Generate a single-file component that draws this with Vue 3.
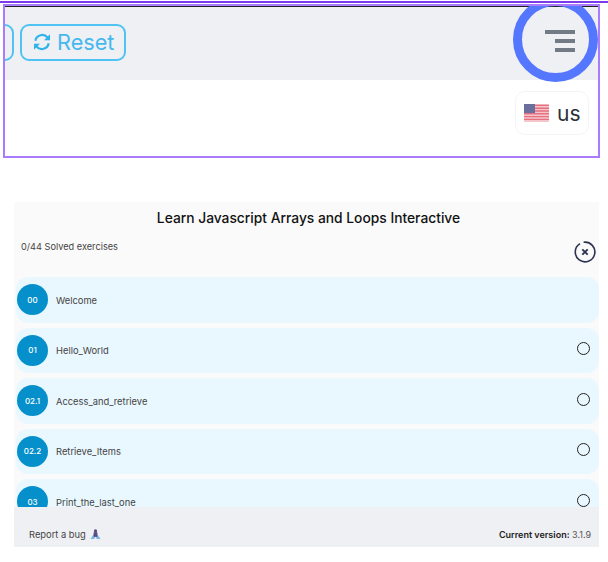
<template>
  <div class="page">
    <div class="top-line"></div>
    <div class="frame">
      <div class="dark-line"></div>
      <header class="toolbar">
        <div class="btn btn-cut"></div>
        <button class="btn reset">
          <svg class="reset-icon" viewBox="0 0 24 24" fill="none" stroke="#2fb4ea" stroke-width="2.6">
            <path d="M4 10.5A8.3 8.3 0 0 1 18.6 6.6L21 9" />
            <path d="M21.6 2.6V9.8H14.4Z" fill="#2fb4ea" stroke="none" />
            <path d="M20 13.5A8.3 8.3 0 0 1 5.4 17.4L3 15" />
            <path d="M2.4 21.4V14.2H9.6Z" fill="#2fb4ea" stroke="none" />
          </svg>
          <span>Reset</span>
        </button>
        <div class="burger">
          <span class="bar bar-long"></span>
          <span class="bar"></span>
          <span class="bar"></span>
        </div>
      </header>
      <div class="lang-row">
        <div class="lang">
          <svg class="flag" viewBox="0 0 25 18">
            <rect width="25" height="18" rx="1" fill="#f6c4cb" />
            <path d="M0 1.4H25M0 4.2H25M0 7H25M0 9.8H25M0 12.6H25M0 15.4H25" stroke="#e5707f" stroke-width="1.4" />
            <rect width="11" height="9" fill="#6a6f9e" />
          </svg>
          <span>us</span>
        </div>
      </div>
      <div class="ring"></div>
    </div>

    <section class="card">
      <h1>Learn Javascript Arrays and Loops Interactive</h1>
      <div class="progress">
        <span>0/44 Solved exercises</span>
        <svg class="close" viewBox="0 0 22 22" fill="none" stroke="#2d3350">
          <path d="M9.6 1.3A9.8 9.8 0 1 1 6 2.6" stroke-width="1.6" />
          <path d="M8.3 8.3L13.7 13.7M13.7 8.3L8.3 13.7" stroke-width="1.9" />
        </svg>
      </div>
      <ul class="list">
        <li v-for="ex in exercises" :key="ex.id" class="row">
          <span class="num">{{ ex.id }}</span>
          <span class="name">{{ ex.name }}</span>
          <span v-if="ex.id !== '00'" class="status"></span>
        </li>
      </ul>
      <footer class="foot">
        <span class="bug">
          Report a bug
          <svg class="bug-icon" viewBox="0 0 12 12">
            <path d="M0.5 11L4.5 5H7.5L11.5 11H7.5L6 8.5L4.5 11Z" fill="#7ab6e6" />
            <rect x="4" y="3.5" width="4" height="5" fill="#5c4a7c" />
            <circle cx="6" cy="2.2" r="1.8" fill="#5c4a7c" />
          </svg>
        </span>
        <span class="version"><b>Current version:</b> 3.1.9</span>
      </footer>
    </section>
  </div>
</template>

<script setup>
const exercises = [
  { id: "00", name: "Welcome" },
  { id: "01", name: "Hello_World" },
  { id: "02.1", name: "Access_and_retrieve" },
  { id: "02.2", name: "Retrieve_Items" },
  { id: "03", name: "Print_the_last_one" },
];
</script>

<style>
html, body {
  margin: 0;
  background: #fff;
}
</style>

<style scoped>
.page {
  width: 608px;
  height: 562px;
  overflow: hidden;
  font-family: Inter, "Liberation Sans", sans-serif;
}
.top-line {
  height: 2px;
  margin-top: 1px;
  background: #7c3aed;
}
.frame {
  position: relative;
  box-sizing: border-box;
  width: 597px;
  height: 154px;
  margin: 1px 0 0 3px;
  border: 2px solid #a97bff;
  overflow: hidden;
}
.dark-line {
  height: 1px;
  background: #222;
}
.toolbar {
  box-sizing: border-box;
  display: flex;
  align-items: center;
  gap: 6px;
  height: 73px;
  padding-bottom: 3px;
  background: #eff0f4;
}
.btn {
  box-sizing: border-box;
  height: 37px;
  border: 2px solid #4fc3f3;
  border-radius: 9px;
  background: transparent;
}
.btn-cut {
  width: 20px;
  margin-left: -11px;
}
.reset {
  display: flex;
  align-items: center;
  gap: 5px;
  width: 106px;
  padding: 0 0 0 10px;
  font-family: inherit;
  font-size: 21.7px;
  color: #46b8ee;
}
.reset-icon {
  width: 20px;
  height: 20px;
}
.burger {
  display: flex;
  flex-direction: column;
  align-items: flex-end;
  gap: 5px;
  margin-left: auto;
  margin-right: 23px;
  margin-bottom: 2px;
}
.bar {
  width: 20px;
  height: 4px;
  background: #717a85;
}
.bar-long {
  width: 30px;
}
.lang-row {
  display: flex;
  justify-content: flex-end;
  padding: 11px 9px 0 0;
}
.lang {
  box-sizing: border-box;
  display: flex;
  align-items: center;
  gap: 8px;
  width: 74px;
  height: 44px;
  padding-left: 8px;
  border: 1px solid #f4f4f6;
  border-radius: 10px;
  font-size: 21px;
  color: #2b3038;
}
.flag {
  width: 25px;
  height: 18px;
}
.ring {
  position: absolute;
  top: -9px;
  right: 0;
  width: 85px;
  height: 85px;
  box-sizing: border-box;
  border: 9px solid #5577ff;
  border-radius: 50%;
}
.card {
  display: flex;
  flex-direction: column;
  width: 585px;
  height: 345px;
  margin: 44px 0 0 14px;
  background: #fafafa;
}
h1 {
  margin: 0;
  padding: 8px 0 0 4px;
  height: 24px;
  font-size: 13.8px;
  line-height: 17px;
  font-weight: 500;
  text-align: center;
  color: #111;
}
.progress {
  display: flex;
  justify-content: space-between;
  height: 37px;
  padding: 6px 3px 0 7px;
  font-size: 9.2px;
  line-height: 14px;
  color: #444;
}
.close {
  width: 22px;
  height: 22px;
  margin-top: 1px;
}
.list {
  flex: 1;
  display: flex;
  flex-direction: column;
  gap: 5px;
  min-height: 0;
  margin: 0;
  padding: 0 0 0 2px;
  list-style: none;
  overflow: hidden;
}
.row {
  flex: none;
  box-sizing: border-box;
  display: flex;
  align-items: center;
  height: 45.5px;
  padding: 0 9px 0 1px;
  border-radius: 12px;
  background: #e9f7fe;
  font-size: 9.35px;
  color: #444;
}
.num {
  flex: none;
  display: flex;
  align-items: center;
  justify-content: center;
  width: 31px;
  height: 31px;
  border-radius: 50%;
  background: #0590cc;
  color: #fff;
  font-size: 8px;
  font-weight: 500;
}
.name {
  margin: 1px 0 0 8px;
}
.status {
  box-sizing: border-box;
  width: 13px;
  height: 13px;
  margin-left: auto;
  margin-top: -3px;
  border: 1.7px solid #222;
  border-radius: 50%;
}
.foot {
  flex: none;
  display: flex;
  align-items: center;
  justify-content: space-between;
  height: 40px;
  padding: 14px 8px 0 15px;
  box-sizing: border-box;
  background: #eff0f4;
  font-size: 9.35px;
  color: #444;
}
.bug {
  display: flex;
  align-items: center;
  gap: 4px;
}
.bug-icon {
  width: 11px;
  height: 11px;
}
.version {
  font-size: 9px;
  color: #555;
}
.version b {
  font-weight: 600;
  color: #222;
}
</style>
